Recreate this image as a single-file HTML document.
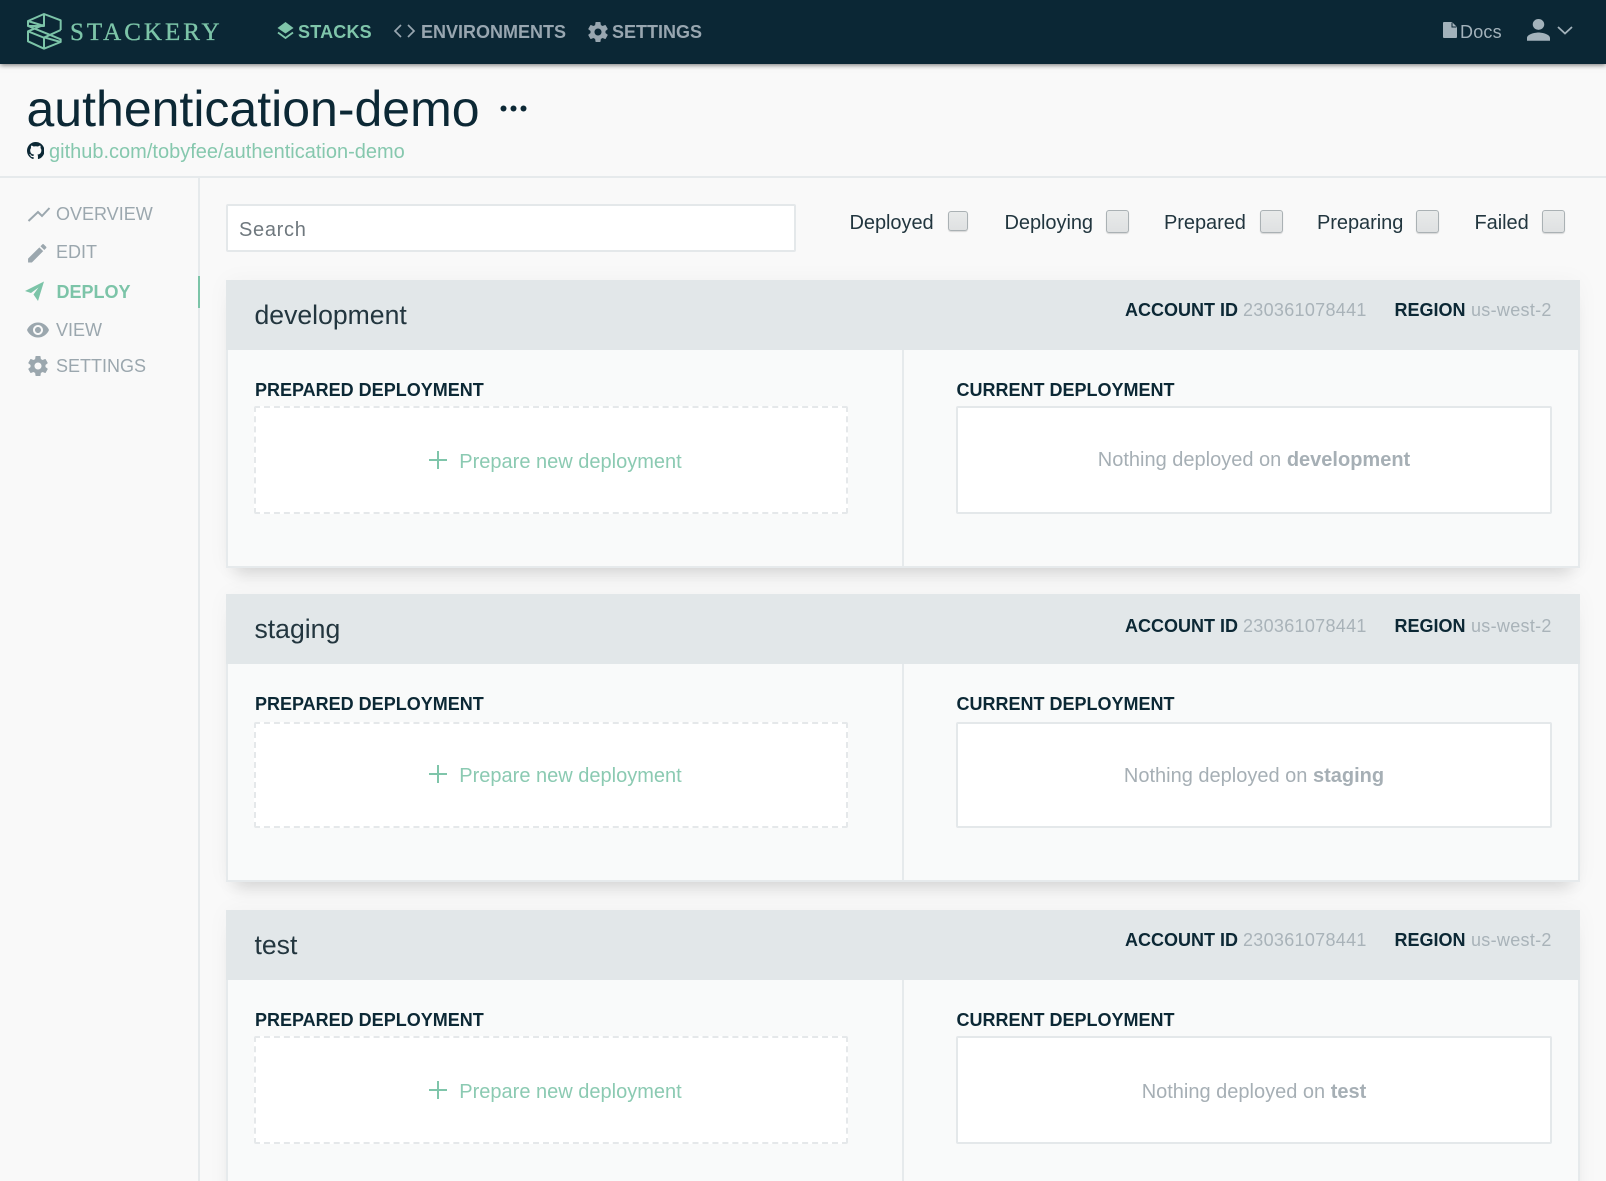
<!DOCTYPE html>
<html lang="en"><head><meta charset="utf-8"><title>authentication-demo</title>
<style>
html,body{margin:0;padding:0;background:#f9f9f9}
#p{position:relative;width:1606px;height:1181px;overflow:hidden;background:#f9f9f9;font-family:"Liberation Sans",Arial,sans-serif;color:#0c2835}
#p div,#p span.a,#p svg{position:absolute}
.t{position:absolute;white-space:nowrap;line-height:30px;height:30px}
.b{font-weight:700}
.n{font-size:18px;font-weight:700;color:#98a6b0}
.g{color:#7fc5aa}
.s{font-size:18px;color:#9ba7ae}
.f{font-size:20px;color:#22363f;letter-spacing:-.05px}
.cb{width:21px;height:21px;background:linear-gradient(#e8eaea,#dfe1e2);border:1px solid #aab1b4;border-radius:3px;box-shadow:0 1px 1px rgba(0,0,0,.14)}
.card{left:226px;width:1354px;background:#f9fafa;box-sizing:border-box;border:2px solid #e6eaec;border-top:0;box-shadow:0 0 22px rgba(0,0,0,.035),0 15px 16px -9px rgba(0,0,0,.13)}
.hd{left:226px;width:1354px;height:70px;background:#e2e7e9}
.div{left:902px;width:2px;background:#e6eaec}
.ct{font-size:26.6px;color:#23363f}
.k{font-size:18px;font-weight:700;color:#0c2835}
.v{font-size:18px;color:#a9b3b9;letter-spacing:.3px}
.dash{left:254px;width:594px;box-sizing:border-box;border:2px dashed #e5e8ea;background:#fff;border-radius:2px}
.cur{left:956px;width:596px;box-sizing:border-box;border:2px solid #e4e8ea;background:#fff;border-radius:2px}
.pn{font-size:20px;color:#8bcab2}
.no{font-size:20px;color:#a6afb5;width:596px;left:956px;text-align:center}
</style></head><body><div id="p">

<div style="left:0;top:0;width:1606px;height:64px;background:#0b2735;box-shadow:0 1px 5px rgba(0,0,0,.55);z-index:2"></div>
<div style="left:0;top:0;width:1606px;height:64px;z-index:3">
<svg style="left:24px;top:12px" width="42" height="40" viewBox="0 0 126 120" fill="none" stroke="#7cc4a8" stroke-width="6" stroke-linejoin="round"><path d="M110 54V25L60 6 12 27v15l50 20 48 20v8l-50 20-48-22V58l48-20"/><path d="M60 6v36L12 27M60 110V76l50 14M62 76l48-22M12 42l48 0"/><path d="M12 58l50 20"/></svg>
<span class="t" style="left:70px;top:18px;font-family:'Liberation Serif',serif;font-size:25px;letter-spacing:3px;color:#7cc4a8;-webkit-text-stroke:.35px #7cc4a8">STACKERY</span>
<svg style="left:277px;top:22px" width="17" height="18" viewBox="0 0 17 18"><path d="M8.500 0L16.500 6 8.500 11.500.5 6z" fill="#7fc5aa"/><path d="M1 10.500L8.500 16 16 10.500" fill="none" stroke="#7fc5aa" stroke-width="1.800"/></svg>
<span class="t n g" style="left:298px;top:17px;letter-spacing:.2px">STACKS</span>
<svg style="left:393px;top:24px" width="23" height="14" viewBox="0 0 23 14" fill="none" stroke="#98a6b0" stroke-width="1.700"><path d="M8 1L2 7l6 6M15 1l6 6-6 6"/></svg>
<span class="t n" style="left:421px;top:17px">ENVIRONMENTS</span>
<svg style="left:586px;top:20px" width="24" height="24" viewBox="0 0 24 24" fill="#98a6b0"><path d="M19.430 12.980c.04-.32.07-.64.07-.98s-.03-.66-.07-.98l2.110-1.650c.19-.15.24-.42.12-.64l-2-3.460c-.12-.22-.39-.3-.61-.22l-2.490 1c-.52-.4-1.080-.73-1.690-.98l-.38-2.650C14.460 2.180 14.250 2 14 2h-4c-.25 0-.46.18-.49.42l-.38 2.650c-.61.25-1.170.59-1.690.98l-2.490-1c-.23-.09-.49 0-.61.22l-2 3.460c-.13.22-.07.49.12.64l2.110 1.650c-.04.32-.07.65-.07.98s.03.66.07.98l-2.110 1.650c-.19.15-.24.42-.12.64l2 3.460c.12.22.39.3.61.22l2.490-1c.52.4 1.080.73 1.690.98l.38 2.650c.03.24.24.42.49.42h4c.25 0 .46-.18.49-.42l.38-2.650c.61-.25 1.170-.59 1.690-.98l2.490 1c.23.09.49 0 .61-.22l2-3.460c.12-.22.07-.49-.12-.64l-2.110-1.650zM12 15.500c-1.930 0-3.500-1.570-3.500-3.500s1.570-3.500 3.500-3.500 3.500 1.570 3.500 3.500-1.570 3.500-3.500 3.500z"/></svg>
<span class="t n" style="left:612px;top:17px">SETTINGS</span>
<svg style="left:1443px;top:22px" width="14" height="16" viewBox="0 0 14 16"><path d="M1 0h8l5 5v10a1 1 0 0 1-1 1H1a1 1 0 0 1-1-1V1a1 1 0 0 1 1-1z" fill="#a3b2bb"/><path d="M9 .5V5h4.500" fill="none" stroke="#0b2735" stroke-width="1"/></svg>
<span class="t" style="left:1460px;top:17px;font-size:18px;letter-spacing:.2px;color:#a3b2bb">Docs</span>
<svg style="left:1527px;top:19px" width="23" height="21.700" viewBox="4 4 16 16" preserveAspectRatio="none" fill="#a3b2bb"><path d="M12 12c2.210 0 4-1.790 4-4s-1.790-4-4-4-4 1.790-4 4 1.790 4 4 4zm0 2c-2.670 0-8 1.340-8 4v2h16v-2c0-2.660-5.330-4-8-4z"/></svg>
<svg style="left:1557px;top:26px" width="16" height="9" viewBox="0 0 16 9" fill="none" stroke="#a3b2bb" stroke-width="1.800"><path d="M1 1l7 6.500L15 1"/></svg>
</div>

<span class="t" style="left:26.500px;top:84px;height:50px;line-height:50px;font-size:50px;color:#0c2835">authentication-demo</span>
<svg style="left:500px;top:105px" width="27" height="7" viewBox="0 0 27 7" fill="#0c2835"><circle cx="3.500" cy="3.500" r="3"/><circle cx="13.500" cy="3.500" r="3"/><circle cx="23.500" cy="3.500" r="3"/></svg>
<svg style="left:26.500px;top:142px" width="17.500" height="17.500" viewBox="0 0 16 16" fill="#0c2835"><path d="M8 0C3.580 0 0 3.580 0 8c0 3.540 2.290 6.530 5.470 7.590.4.07.55-.17.55-.38 0-.19-.01-.82-.01-1.490-2.010.37-2.530-.49-2.690-.94-.09-.23-.48-.94-.82-1.130-.28-.15-.68-.52-.01-.53.63-.01 1.080.58 1.230.82.72 1.210 1.870.87 2.330.66.07-.52.28-.87.51-1.070-1.780-.2-3.640-.89-3.640-3.950 0-.87.31-1.590.82-2.150-.08-.2-.36-1.020.08-2.120 0 0 .67-.21 2.200.82.64-.18 1.320-.27 2-.27.68 0 1.360.09 2 .27 1.530-1.040 2.200-.82 2.200-.82.44 1.100.16 1.920.08 2.120.51.56.82 1.270.82 2.150 0 3.070-1.870 3.750-3.650 3.950.29.25.54.73.54 1.480 0 1.070-.01 1.930-.01 2.200 0 .21.15.46.55.38A8.013 8.013 0 0 0 16 8c0-4.420-3.580-8-8-8z"/></svg>
<span class="t g" style="left:49px;top:137px;font-size:20px;color:#86c8ae">github.com/tobyfee/authentication-demo</span>

<div style="left:0;top:176px;width:1606px;height:2px;background:#e6eaec"></div>
<div style="left:198px;top:177px;width:2px;height:1004px;background:#e6eaec"></div>
<div style="left:197.500px;top:276px;width:2px;height:32px;background:#7cc4a8"></div>

<svg style="left:27px;top:206px" width="24" height="16" viewBox="0 0 24 16" fill="none" stroke="#9ba7ae" stroke-width="2"><path d="M1.500 15L11 6l4 4 7.500-8"/></svg>
<span class="t s" style="left:56px;top:199px">OVERVIEW</span>
<svg style="left:25px;top:240.500px" width="24.500" height="24.500" viewBox="0 0 24 24" fill="#9ba7ae"><path d="M3 17.250V21h3.750L17.810 9.940l-3.750-3.750L3 17.250zM20.710 7.040c.39-.39.39-1.020 0-1.410l-2.340-2.340c-.39-.39-1.020-.39-1.410 0l-1.830 1.830 3.750 3.750 1.830-1.830z"/></svg>
<span class="t s" style="left:56px;top:237px">EDIT</span>
<svg style="left:24px;top:280px" width="22" height="22" viewBox="0 0 22 22" fill="#7cc4a8"><path d="M1 11L20 1.500 14 21l-4.500-6.500 5-7L7 13z"/></svg>
<span class="t s b g" style="left:56.500px;top:276.500px;color:#7cc4a8">DEPLOY</span>
<svg style="left:26px;top:318px" width="24" height="24" viewBox="0 0 24 24" fill="#9ba7ae"><path d="M12 4.500C7 4.500 2.730 7.610 1 12c1.730 4.390 6 7.500 11 7.500s9.270-3.110 11-7.500c-1.730-4.390-6-7.500-11-7.500zM12 17c-2.760 0-5-2.240-5-5s2.240-5 5-5 5 2.240 5 5-2.240 5-5 5zm0-8c-1.660 0-3 1.340-3 3s1.340 3 3 3 3-1.340 3-3-1.340-3-3-3z"/></svg>
<span class="t s" style="left:56px;top:315px">VIEW</span>
<svg style="left:25.500px;top:354px" width="24" height="24" viewBox="0 0 24 24" fill="#9ba7ae"><path d="M19.430 12.980c.04-.32.07-.64.07-.98s-.03-.66-.07-.98l2.110-1.650c.19-.15.24-.42.12-.64l-2-3.460c-.12-.22-.39-.3-.61-.22l-2.490 1c-.52-.4-1.080-.73-1.690-.98l-.38-2.650C14.460 2.180 14.250 2 14 2h-4c-.25 0-.46.18-.49.42l-.38 2.650c-.61.25-1.170.59-1.690.98l-2.490-1c-.23-.09-.49 0-.61.22l-2 3.460c-.13.22-.07.49.12.64l2.110 1.650c-.04.32-.07.65-.07.98s.03.66.07.98l-2.110 1.650c-.19.15-.24.42-.12.64l2 3.460c.12.22.39.3.61.22l2.490-1c.52.4 1.080.73 1.690.98l.38 2.650c.03.24.24.42.49.42h4c.25 0 .46-.18.49-.42l.38-2.650c.61-.25 1.170-.59 1.690-.98l2.490 1c.23.09.49 0 .61-.22l2-3.460c.12-.22.07-.49-.12-.64l-2.110-1.650zM12 15.500c-1.930 0-3.500-1.570-3.500-3.500s1.570-3.500 3.500-3.500 3.500 1.570 3.500 3.500-1.570 3.500-3.500 3.500z"/></svg>
<span class="t s" style="left:56px;top:351px">SETTINGS</span>

<div style="left:226px;top:204px;width:570px;height:48px;box-sizing:border-box;background:#fff;border:2px solid #e4e8ea;border-radius:2px"></div>
<span class="t" style="left:239px;top:215px;font-size:20px;letter-spacing:.7px;color:#6f787e">Search</span>

<span class="t f" style="left:849.500px;top:208px">Deployed</span><div class="cb" style="left:948px;top:211px;width:18px;height:18px"></div>
<span class="t f" style="left:1004.500px;top:208px">Deploying</span><div class="cb" style="left:1106px;top:210px"></div>
<span class="t f" style="left:1164px;top:208px">Prepared</span><div class="cb" style="left:1260px;top:210px"></div>
<span class="t f" style="left:1317px;top:208px">Preparing</span><div class="cb" style="left:1416px;top:210px"></div>
<span class="t f" style="left:1474.500px;top:208px">Failed</span><div class="cb" style="left:1542px;top:210px"></div>

<!-- development -->
<div class="card" style="top:280px;height:287.500px"></div>
<div class="hd" style="top:280px"></div>
<div class="div" style="top:350px;height:216px"></div>
<span class="t ct" style="left:254.500px;top:300px">development</span>
<span class="t k" style="left:1125px;top:295px">ACCOUNT ID</span><span class="t v" style="left:1243px;top:295px">230361078441</span>
<span class="t k" style="left:1394.500px;top:295px">REGION</span><span class="t v" style="left:1471px;top:295px">us-west-2</span>
<span class="t k" style="left:255px;top:375px">PREPARED DEPLOYMENT</span>
<span class="t k" style="left:956.500px;top:375px">CURRENT DEPLOYMENT</span>
<div class="dash" style="top:406px;height:108px"></div>
<div class="cur" style="top:406px;height:108px"></div>
<svg style="left:428px;top:450px" width="20" height="20" viewBox="0 0 20 20" stroke="#7fc5aa" stroke-width="2"><path d="M10 1v18M1 10h18"/></svg>
<span class="t pn" style="left:459.300px;top:447px">Prepare new deployment</span>
<span class="t no" style="top:445px">Nothing deployed on <b>development</b></span>

<!-- staging -->
<div class="card" style="top:594px;height:287.500px"></div>
<div class="hd" style="top:594px"></div>
<div class="div" style="top:664px;height:216px"></div>
<span class="t ct" style="left:254.500px;top:614px">staging</span>
<span class="t k" style="left:1125px;top:611px">ACCOUNT ID</span><span class="t v" style="left:1243px;top:611px">230361078441</span>
<span class="t k" style="left:1394.500px;top:611px">REGION</span><span class="t v" style="left:1471px;top:611px">us-west-2</span>
<span class="t k" style="left:255px;top:689px">PREPARED DEPLOYMENT</span>
<span class="t k" style="left:956.500px;top:689px">CURRENT DEPLOYMENT</span>
<div class="dash" style="top:722px;height:106px"></div>
<div class="cur" style="top:722px;height:106px"></div>
<svg style="left:428px;top:764px" width="20" height="20" viewBox="0 0 20 20" stroke="#7fc5aa" stroke-width="2"><path d="M10 1v18M1 10h18"/></svg>
<span class="t pn" style="left:459.300px;top:761px">Prepare new deployment</span>
<span class="t no" style="top:761px">Nothing deployed on <b>staging</b></span>

<!-- test -->
<div class="card" style="top:910px;height:300px"></div>
<div class="hd" style="top:910px"></div>
<div class="div" style="top:980px;height:201px"></div>
<span class="t ct" style="left:254.500px;top:930px">test</span>
<span class="t k" style="left:1125px;top:925px">ACCOUNT ID</span><span class="t v" style="left:1243px;top:925px">230361078441</span>
<span class="t k" style="left:1394.500px;top:925px">REGION</span><span class="t v" style="left:1471px;top:925px">us-west-2</span>
<span class="t k" style="left:255px;top:1005px">PREPARED DEPLOYMENT</span>
<span class="t k" style="left:956.500px;top:1005px">CURRENT DEPLOYMENT</span>
<div class="dash" style="top:1036px;height:108px"></div>
<div class="cur" style="top:1036px;height:108px"></div>
<svg style="left:428px;top:1080px" width="20" height="20" viewBox="0 0 20 20" stroke="#7fc5aa" stroke-width="2"><path d="M10 1v18M1 10h18"/></svg>
<span class="t pn" style="left:459.300px;top:1077px">Prepare new deployment</span>
<span class="t no" style="top:1077px">Nothing deployed on <b>test</b></span>

</div></body></html>
